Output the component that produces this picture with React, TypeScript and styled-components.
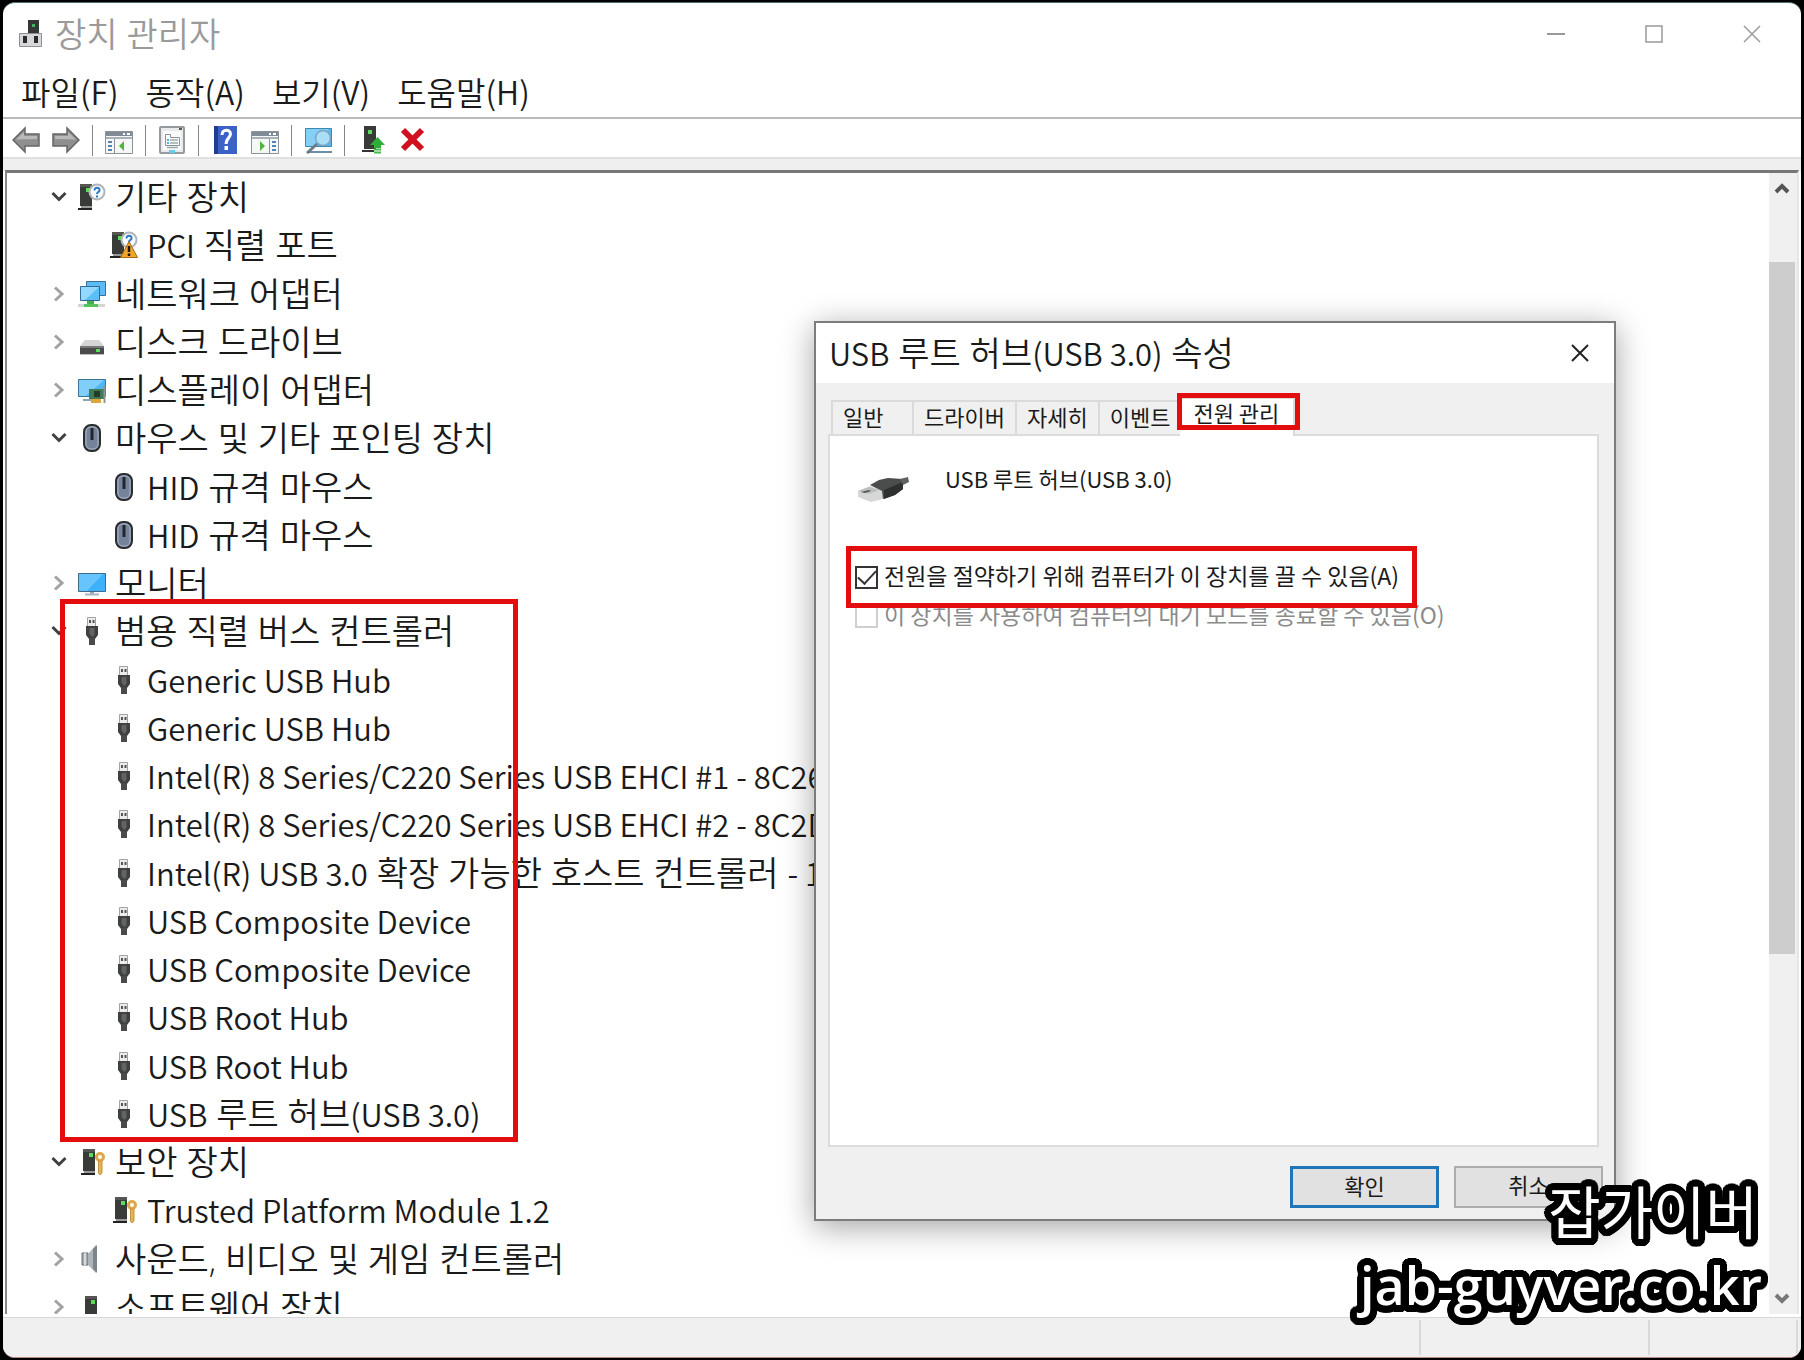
import React from "react";
import styled, { createGlobalStyle, css } from "styled-components";

const RED = "#e30d0d";

const GlobalStyle = createGlobalStyle`
  * { box-sizing: border-box; }
  html, body, #root { height: 100%; }
  body {
    margin: 0;
    background: #000;
    color: #1a1a1a;
    font-family: "Noto Sans CJK KR", "Noto Sans", sans-serif;
    font-weight: 350;
    overflow: hidden;
  }
  button { font: inherit; color: inherit; cursor: default; }
`;

const largeText = css`
  font-family: "Open Sans", "Noto Sans CJK KR", sans-serif;
  font-size: 34px;
  line-height: 40px;
  white-space: nowrap;
`;

const Latin = styled.span`
  font-family: "Noto Sans CJK KR", "Noto Sans", sans-serif;
  font-size: 31px;
`;

/* Latin runs are set three pixels smaller than the Hangul around them. */
const Mixed = ({ text }: { text: string }) => (
  <span>
    {text.split(/([!-~](?:[ -~]*[!-~])?)/).map((part, i) =>
      i % 2 ? <Latin key={i}>{part}</Latin> : part
    )}
  </span>
);

const Desktop = styled.div`
  height: 100%;
  padding: 2px 3px;
  display: flex;
  position: relative;
`;

const Window = styled.main`
  flex: 1;
  min-width: 0;
  display: flex;
  flex-direction: column;
  background: #fff;
  border-top: 1px solid #4d6b72;
  border-bottom: 1px solid #b98a8a;
  border-radius: 12px;
  overflow: hidden;
`;

const TitleBar = styled.header`
  height: 62px;
  flex: none;
  display: flex;
  align-items: center;
  gap: 10px;
  padding: 0 0 0 14px;
  color: #9a9a9a;
`;

const WindowTitle = styled.h1`
  ${largeText}
  flex: 1;
  margin: 0;
  font-weight: inherit;
`;

const CaptionButtons = styled.div`
  display: flex;
`;

const CaptionButton = styled.button`
  width: 98px;
  height: 60px;
  padding: 0;
  border: 0;
  background: none;
  display: grid;
  place-items: center;
`;

const MenuBar = styled.nav`
  height: 54px;
  flex: none;
  display: flex;
  align-items: center;
  gap: 27px;
  padding-left: 18px;
  border-bottom: 2px solid #b9bbbb;
`;

const MenuItem = styled.button`
  padding: 0;
  border: 0;
  background: none;
  font-size: 32px;
  line-height: 40px;
`;

const ToolBar = styled.div`
  height: 38px;
  flex: none;
  display: flex;
  align-items: center;
  gap: 12px;
  padding: 4px 0 0 9px;
`;

const ToolButton = styled.button`
  width: 28px;
  height: 28px;
  padding: 0;
  border: 0;
  background: none;
  display: block;
`;

const Separator = styled.span`
  width: 1px;
  height: 31px;
  background: #858585;
`;

const Body = styled.section`
  flex: 1;
  min-height: 0;
  display: flex;
  flex-direction: column;
  padding: 11px 2px 3px 2px;
  border-top: 2px solid #e0e0e0;
  background: linear-gradient(#efefef 13px, #fff 13px);
`;

const Pane = styled.div`
  flex: 1;
  min-height: 0;
  display: flex;
  border-top: 3px solid #777;
  border-left: 2px solid #8a8a8a;
  border-right: 2px solid #e6e6e6;
  overflow: hidden;
`;

const Tree = styled.ul`
  flex: 1;
  min-width: 0;
  height: calc(100% + 17px);
  margin: 0;
  padding: 0 0 0 44px;
  list-style: none;
  display: flex;
  flex-direction: column;
`;

const Group = styled.li<{ $rows: number }>`
  flex: ${(p) => p.$rows} 0 0;
  min-height: 0;
  display: grid;
  grid-auto-rows: 1fr;
  position: relative;
`;

const Row = styled.div<{ $child?: boolean }>`
  ${largeText}
  min-height: 0;
  display: flex;
  align-items: center;
  padding-left: ${(p) => (p.$child ? 59 : 0)}px;
`;

const Toggle = styled.button`
  width: 16px;
  height: 24px;
  margin-right: 11px;
  padding: 0;
  border: 0;
  background: none;
  display: grid;
  place-items: center;
`;

const RowIcon = styled.span`
  width: 28px;
  height: 28px;
  margin-right: 9px;
  flex: none;
`;

const GroupMark = styled.span`
  position: absolute;
  inset: -8px auto -4px 9px;
  width: 458px;
  border: 5px solid ${RED};
  pointer-events: none;
`;

const ScrollBar = styled.div`
  width: 28px;
  display: flex;
  flex-direction: column;
  align-items: center;
  background: #f0f0f0;
`;

const ScrollButton = styled.button`
  width: 28px;
  height: 30px;
  padding: 0 2px 0 0;
  border: 0;
  background: none;
  display: grid;
  place-items: center;
`;

const ScrollTrack = styled.div`
  flex: 1;
  width: 28px;
  padding: 59px 2px 0 0;
`;

const ScrollThumb = styled.div`
  height: calc(68% - 3px);
  background: #cdcdcd;
`;

const StatusBar = styled.footer`
  height: 40px;
  flex: none;
  display: flex;
  justify-content: flex-end;
  padding: 2px 3px 2px 0;
  border-top: 1px solid #d8d8d8;
  background: #f0f0f0;
`;

const StatusCell = styled.span<{ $width: number }>`
  width: ${(p) => p.$width}px;
  border-right: 2px solid #d9d9d9;
`;

const Dialog = styled.section`
  position: absolute;
  left: 814px;
  top: 321px;
  width: 802px;
  height: 900px;
  display: flex;
  flex-direction: column;
  border: 2px solid #7c7c7c;
  background: #f0f0f0;
  box-shadow: 0 6px 30px rgba(0, 0, 0, 0.36);
`;

const DialogTitleBar = styled.header`
  height: 60px;
  flex: none;
  display: flex;
  align-items: center;
  justify-content: space-between;
  padding: 0 10px 0 13px;
  background: #fff;
`;

const DialogTitle = styled.h2`
  ${largeText}
  margin: 0;
  font-weight: inherit;
`;

const DialogClose = styled.button`
  width: 48px;
  height: 48px;
  padding: 0;
  border: 0;
  background: none;
  display: grid;
  place-items: center;
`;

const TabList = styled.div`
  height: 51px;
  flex: none;
  display: flex;
  align-items: flex-end;
  padding-left: 15px;
  font-size: 22px;
  font-weight: 400;
`;

const Tab = styled.button<{ $active?: boolean }>`
  position: relative;
  height: ${(p) => (p.$active ? 39 : 34)}px;
  min-width: ${(p) => (p.$active ? 115 : 81)}px;
  margin-bottom: ${(p) => (p.$active ? -2 : 0)}px;
  padding: ${(p) => (p.$active ? "0 13px 11px" : "0 10px 4px")};
  border: solid #dadada;
  border-width: ${(p) => (p.$active ? "2px 2px 0 0" : "2px 0 0 2px")};
  background: ${(p) => (p.$active ? "#fff" : "#f0f0f0")};
  text-align: left;
  line-height: 26px;
  white-space: nowrap;
  z-index: 1;
`;

const TabMark = styled.span`
  position: absolute;
  inset: -6px -7px 6px -3px;
  border: 5px solid ${RED};
`;

const TabPanel = styled.div`
  flex: 1;
  margin: 0 15px 0 12px;
  padding: 26px 25px;
  border: 2px solid #dcdcdc;
  background: #fff;
  font-size: 22px;
  font-weight: 400;
  line-height: 32px;
`;

const DeviceLine = styled.div`
  display: flex;
  gap: 38px;
  height: 84px;
`;

const DevicePicture = styled.span`
  width: 52px;
  padding: 14px 0 0 3px;
`;

const OptionMark = styled.div`
  width: 571px;
  height: 62px;
  margin-left: -9px;
  padding-left: 4px;
  border: 5px solid ${RED};
  display: flex;
  align-items: center;
  position: relative;
  z-index: 1;
`;

const OptionLabel = styled.label<{ $muted?: boolean }>`
  display: flex;
  align-items: center;
  gap: 6px;
  height: 24px;
  color: ${(p) => (p.$muted ? "#8b8b8b" : "inherit")};
  font-size: 23px;
  white-space: nowrap;
`;

const OptionText = styled.span`
  padding-bottom: 4px;
`;

const MutedOption = styled.div`
  margin-top: -4px;
`;

const CheckBox = styled.input`
  appearance: none;
  width: 23px;
  height: 23px;
  margin: 0;
  border: 2px solid #333;
  background: #fff;
  display: grid;
  place-items: center;
  &:checked::after {
    content: "";
    width: 16px;
    height: 8px;
    margin-bottom: 5px;
    border: solid #333;
    border-width: 0 0 2px 2px;
    transform: rotate(-47deg);
  }
  &:disabled {
    border-color: #cfcfcf;
  }
`;

const DialogActions = styled.footer`
  height: 72px;
  flex: none;
  display: flex;
  justify-content: flex-end;
  gap: 15px;
  padding: 19px 11px 0 0;
`;

const ActionButton = styled.button<{ $default?: boolean }>`
  width: 149px;
  height: 42px;
  padding: 0 0 6px;
  border: ${(p) => (p.$default ? "3px solid #1f75b8" : "2px solid #adadad")};
  background: #e1e1e1;
  font-size: 22px;
  font-weight: 400;
  line-height: 32px;
`;

/* A ring of hard shadows gives the letters a round-cornered outline. */
const outline = (radius: number) =>
  Array.from({ length: 32 }, (_, i) => {
    const a = (i * Math.PI) / 16;
    return `${(Math.cos(a) * radius).toFixed(1)}px ${(Math.sin(a) * radius).toFixed(1)}px 0 #000`;
  }).join(", ");

const Watermark = styled.aside`
  position: absolute;
  right: 42px;
  bottom: 37px;
  color: #fff;
  line-height: 76px;
  text-align: right;
  text-shadow: ${outline(7)}, ${outline(4)};
`;

const WatermarkName = styled.div`
  padding-right: 4px;
  font-size: 57px;
  font-weight: 400;
`;

const WatermarkUrl = styled.div`
  font-family: "Open Sans", "Noto Sans", sans-serif;
  font-size: 52px;
  font-weight: 600;
`;

const Svg = ({ children, w = 28, h = 28 }: { children: React.ReactNode; w?: number; h?: number }) => (
  <svg width={w} height={h} viewBox={`0 0 ${w} ${h}`} fill="none" display="block" aria-hidden="true">
    {children}
  </svg>
);

const Tower = () => (
  <>
    <path d="M2 1h12v22H2z" fill="#383b38" />
    <path d="M2 1h12v3H2z" fill="#555" />
    <path d="M8 5h4v4H8z" fill="#5bdc5b" />
    <path d="M3 23h11v2H3z" fill="#999" />
    <path d="M0 25h14v2H0z" fill="#222" />
  </>
);

const Bubble = () => (
  <>
    <circle cx="19" cy="9" r="7.500" fill="#f8fbfd" stroke="#aeb4b8" strokeWidth="2" />
    <path d="M16.500 7.500c0-4 5.500-3.500 5 0-.3 1.700-2.500 1.500-2.500 3.500M19 12.500v2" stroke="#2878c8" strokeWidth="2" />
  </>
);

const icons: Record<string, React.ReactNode> = {
  unknown: <Svg><Tower /><Bubble /></Svg>,
  warning: (
    <Svg>
      <Tower />
      <Bubble />
      <path d="M19 10.500l8.500 16h-17z" fill="#f0a528" stroke="#a56a12" />
      <path d="M19 15v6M19 22.500v2.500" stroke="#22170a" strokeWidth="2.500" />
    </Svg>
  ),
  network: (
    <Svg>
      <path d="M8.500 1.500h19v14h-19z" fill="#5bbcf5" stroke="#3a6f96" />
      <path d="M2.500 6.500h19v14h-19z" fill="#5cc0f8" stroke="#2f6c98" />
      <path d="M3 7h18L7 20H3z" fill="#94d9fd" />
      <path d="M9 21h7v3H9z" fill="#3db54a" />
      <path d="M0 24h27v3H0z" fill="#d4d6d6" />
      <path d="M6 24h14v3H6z" fill="#55c35f" />
    </Svg>
  ),
  disk: (
    <Svg>
      <path d="M7 12h14l5 6H2z" fill="#d5d5d5" />
      <path d="M2 18h24v8H2z" fill="#4a4c4c" />
      <path d="M2 18h24v2H2z" fill="#777" />
      <path d="M18 21h4v3h-4z" fill="#58e05a" />
      <path d="M2 26h24v1H2z" fill="#bbb" />
    </Svg>
  ),
  display: (
    <Svg>
      <path d="M.500 3.500h27v17H.500z" fill="#4fb6f4" stroke="#3d7598" />
      <path d="M1 4h25L8 20H1z" fill="#80cffa" />
      <path d="M5 24h10" stroke="#8ba5b5" strokeWidth="2" />
      <path d="M11 13h15v10H11z" fill="#3f7a52" />
      <path d="M16 15h6v6h-6z" fill="#203d2c" />
      <path d="M26.500 10v17" stroke="#8d9494" strokeWidth="2" />
      <path d="M13 23h10v4H13z" fill="#dfa43a" />
    </Svg>
  ),
  mouse: (
    <Svg>
      <rect x="6" y="1" width="16" height="26" rx="7" fill="#74839a" stroke="#2b2d30" strokeWidth="2" />
      <rect x="8" y="3" width="12" height="22" rx="5" stroke="#aab4c2" strokeWidth="1" />
      <path d="M14 4v12" stroke="#22262c" strokeWidth="3" />
    </Svg>
  ),
  monitor: (
    <Svg>
      <path d="M.500 4.500h27v18H.500z" fill="#3fb0fa" stroke="#3e6c8a" />
      <path d="M1 5h24L9 22H1z" fill="#68c4fc" />
      <path d="M12 23h4v2h-4z" fill="#9ab" />
      <path d="M7 25.500h14" stroke="#a6b7c2" strokeWidth="2" />
    </Svg>
  ),
  usb: (
    <Svg>
      <path d="M9.500.500h8v9h-8z" fill="#ececec" stroke="#a3a3a3" />
      <path d="M11 3h2v3h-2zM14.500 3h2v3h-2z" fill="#555" />
      <path d="M8 9h12v9l-3 4h-6l-3-4z" fill="#3f4040" />
      <path d="M11.500 11h5v7l-2 2-3-3z" fill="#626464" />
      <path d="M11 21h6v7h-6z" fill="#4a4a4a" />
    </Svg>
  ),
  security: (
    <Svg>
      <g transform="translate(3 0)">
        <Tower />
        <circle cx="19" cy="9" r="3.500" stroke="#dba94a" strokeWidth="3" fill="#fff" />
        <path d="M17.500 13h3.500v12l-2 2-1.500-2z" fill="#e3b556" stroke="#c4923a" />
      </g>
    </Svg>
  ),
  sound: (
    <Svg>
      <path d="M4 8h6v12H4z" fill="#a4abb0" stroke="#666e74" />
      <path d="M10 9l8-9v28l-8-8z" fill="#aeb5ba" />
      <path d="M15 4l4-4v28l-4-4z" fill="#7c858b" />
      <path d="M7 8v12" stroke="#d5dadd" strokeWidth="2" />
    </Svg>
  ),
  software: <Svg><g transform="translate(5 2)"><Tower /></g></Svg>,
};

const Chevron = ({ open }: { open: boolean }) =>
  open ? (
    <Svg w={16} h={12}><path d="M1.500 2l6.500 6.500L14.500 2" stroke="#404040" strokeWidth="3" /></Svg>
  ) : (
    <Svg w={12} h={16}><path d="M2 1.500L9 8l-7 6.500" stroke="#a2a2a2" strokeWidth="3" /></Svg>
  );

interface DeviceGroup {
  name: string;
  icon: string;
  marked?: boolean;
  childIcon?: string;
  devices?: string[];
}

const groups: DeviceGroup[] = [
  { name: "기타 장치", icon: "unknown", childIcon: "warning", devices: ["PCI 직렬 포트"] },
  { name: "네트워크 어댑터", icon: "network" },
  { name: "디스크 드라이브", icon: "disk" },
  { name: "디스플레이 어댑터", icon: "display" },
  {
    name: "마우스 및 기타 포인팅 장치",
    icon: "mouse",
    devices: ["HID 규격 마우스", "HID 규격 마우스"],
  },
  { name: "모니터", icon: "monitor" },
  {
    name: "범용 직렬 버스 컨트롤러",
    icon: "usb",
    marked: true,
    devices: [
      "Generic USB Hub",
      "Generic USB Hub",
      "Intel(R) 8 Series/C220 Series USB EHCI #1 - 8C26",
      "Intel(R) 8 Series/C220 Series USB EHCI #2 - 8C2D",
      "Intel(R) USB 3.0 확장 가능한 호스트 컨트롤러 - 1.0(Microsoft)",
      "USB Composite Device",
      "USB Composite Device",
      "USB Root Hub",
      "USB Root Hub",
      "USB 루트 허브(USB 3.0)",
    ],
  },
  { name: "보안 장치", icon: "security", devices: ["Trusted Platform Module 1.2"] },
  { name: "사운드, 비디오 및 게임 컨트롤러", icon: "sound" },
  { name: "소프트웨어 장치", icon: "software" },
];

const Arrow = ({ flip }: { flip?: boolean }) => (
  <Svg>
    <g transform={flip ? "matrix(-1 0 0 1 28 0)" : undefined}>
      <path d="M1 14L13 2v6h14v12H13v6z" fill="#8f8f8f" stroke="#666" strokeWidth="1.500" />
      <path d="M4 13.500L12 6v4h13v3z" fill="#b9b9b9" />
    </g>
  </Svg>
);

const PaneIcon = ({ flip }: { flip?: boolean }) => (
  <Svg>
    <path d="M.500 5.500h27v22H.500z" fill="#f6f8f8" stroke="#8b9297" />
    <path d="M1 6h26v4H1z" fill="#7f8b96" />
    <path d="M18 8h2M22 8h3" stroke="#fff" strokeWidth="2" />
    <path d="M1 12h26" stroke="#a9b0b6" strokeWidth="2" />
    <g transform={flip ? "matrix(-1 0 0 1 28 0)" : undefined}>
      <path d="M9.500 13v14" stroke="#8b9297" />
      <path d="M3 16h4M3 20h4M3 24h4" stroke="#4f86b5" strokeWidth="2" />
      <path d="M19 15v10l-5-5z" fill="#50b53c" />
    </g>
  </Svg>
);

const PropertiesIcon = () => (
  <Svg>
    <rect x="2" y="1" width="24" height="26" rx="1" fill="#e8eaeb" stroke="#949a9e" strokeWidth="2" />
    <path d="M5 5h18v19H5z" fill="#fafafa" />
    <path d="M21 3h3" stroke="#555" strokeWidth="2" />
    <path d="M7.500 8.500h5v3h9v8h-14z" fill="#fff" stroke="#8a9298" />
    <path d="M9 14h2M9 17h2" stroke="#4fb4dc" strokeWidth="2" />
    <path d="M12 14h8M12 17h8M9 21.500h11" stroke="#9aa" strokeWidth="1.500" />
    <path d="M11 24h6v3h-6z" fill="#67cdea" />
  </Svg>
);

const HelpIcon = () => (
  <Svg>
    <path d="M3 0h23v28H3z" fill="#3d62c6" />
    <path d="M3 0h4v28H3z" fill="#1f3b92" />
    <path d="M11 9c0-6.500 8.500-6 8.500-1 0 4-4.500 4-4.500 10" stroke="#fff" strokeWidth="3" />
    <path d="M13.500 20h3.500v4h-3.500z" fill="#fff" />
  </Svg>
);

const ScanIcon = () => (
  <Svg>
    <path d="M1.500 2.500h26v18h-26z" fill="#58b9ee" stroke="#3e86b3" />
    <path d="M2 3h23L9 20H2z" fill="#83d0f7" />
    <path d="M5 26h23" stroke="#6d8ea5" strokeWidth="2" />
    <circle cx="19" cy="12" r="7.500" fill="#a9def6" stroke="#7da4bd" strokeWidth="1.500" />
    <path d="M13 18l-10 9" stroke="#6c7d88" strokeWidth="3" />
  </Svg>
);

const UpdateIcon = () => (
  <Svg>
    <g transform="translate(5 0)">
      <path d="M2 0h12v23H2z" fill="#383b38" />
      <path d="M6 4h4v4H6z" fill="#5bdc5b" />
      <path d="M0 24h12v2H0z" fill="#333" />
      <path d="M15.500 11l7.500 8h-4v3h-7v-3H8z" fill="#2fae3a" />
      <path d="M12 23.500h7M12 26.500h7" stroke="#3fbb48" strokeWidth="2" />
    </g>
  </Svg>
);

const RemoveIcon = () => (
  <Svg><path d="M6 4l19 19M25 4L6 23" stroke="#d01220" strokeWidth="6" /></Svg>
);

const ManagerIcon = () => (
  <Svg>
    <path d="M11 0h11v13H11z" fill="#333735" />
    <path d="M15 4h3v3h-3z" fill="#42b560" />
    <path d="M2.500 13.500h22v13h-22z" fill="#d7d7da" stroke="#909094" />
    <path d="M6 16h4v7H6zM17 16h4v7h-4z" fill="#2b2b2b" />
  </Svg>
);

const UsbPlug = () => (
  <Svg w={52} h={26}>
    <path d="M0 15l12-5 13 5v8l-12 3-13-5z" fill="#d6d7d7" />
    <path d="M0 15l11-4 10 3-10 4z" fill="#bdbebf" />
    <path d="M3 16l8-2 2 1-6 2z" fill="#555" />
    <path d="M12 9l9-5 9-2 15 1v10l-8 6-12 4-1-8z" fill="#4b4c4c" />
    <path d="M26 14l19-8v7l-8 6-11 4z" fill="#2e2f2f" />
    <path d="M42 3l8-2 1 5-6 3z" fill="#606161" />
  </Svg>
);

export default function App() {
  return (
    <Desktop>
      <GlobalStyle />
      <Window>
        <TitleBar>
          <ManagerIcon />
          <WindowTitle>장치 관리자</WindowTitle>
          <CaptionButtons>
            <CaptionButton aria-label="최소화"><Svg w={18} h={18}><path d="M0 9h18" stroke="#999" strokeWidth="2" /></Svg></CaptionButton>
            <CaptionButton aria-label="최대화"><Svg w={18} h={18}><path d="M1 1h16v16H1z" stroke="#999" strokeWidth="1.500" /></Svg></CaptionButton>
            <CaptionButton aria-label="닫기"><Svg w={18} h={18}><path d="M1 1l16 16M17 1L1 17" stroke="#999" strokeWidth="1.500" /></Svg></CaptionButton>
          </CaptionButtons>
        </TitleBar>
        <MenuBar>
          {["파일(F)", "동작(A)", "보기(V)", "도움말(H)"].map((m) => <MenuItem key={m}>{m}</MenuItem>)}
        </MenuBar>
        <ToolBar>
          <ToolButton aria-label="뒤로"><Arrow /></ToolButton>
          <ToolButton aria-label="앞으로"><Arrow flip /></ToolButton>
          <Separator />
          <ToolButton aria-label="콘솔 트리"><PaneIcon /></ToolButton>
          <Separator />
          <ToolButton aria-label="속성"><PropertiesIcon /></ToolButton>
          <Separator />
          <ToolButton aria-label="도움말"><HelpIcon /></ToolButton>
          <ToolButton aria-label="작업 창"><PaneIcon flip /></ToolButton>
          <Separator />
          <ToolButton aria-label="하드웨어 변경 사항 검색"><ScanIcon /></ToolButton>
          <Separator />
          <ToolButton aria-label="드라이버 업데이트"><UpdateIcon /></ToolButton>
          <ToolButton aria-label="제거"><RemoveIcon /></ToolButton>
        </ToolBar>
        <Body>
          <Pane>
            <Tree>
              {groups.map((g) => {
                const devices = g.devices ?? [];
                return (
                  <Group key={g.name} $rows={devices.length + 1}>
                    <Row>
                      <Toggle aria-label={g.name} aria-expanded={devices.length > 0}>
                        <Chevron open={devices.length > 0} />
                      </Toggle>
                      <RowIcon>{icons[g.icon]}</RowIcon>
                      <span>{g.name}</span>
                    </Row>
                    {devices.map((d, i) => (
                      <Row key={i} $child>
                        <RowIcon>{icons[g.childIcon ?? g.icon]}</RowIcon>
                        <Mixed text={d} />
                      </Row>
                    ))}
                    {g.marked && <GroupMark />}
                  </Group>
                );
              })}
            </Tree>
            <ScrollBar>
              <ScrollButton aria-label="위로"><Svg w={16} h={12}><path d="M2 10l6-6 6 6" stroke="#555" strokeWidth="4" /></Svg></ScrollButton>
              <ScrollTrack><ScrollThumb /></ScrollTrack>
              <ScrollButton aria-label="아래로"><Svg w={16} h={12}><path d="M2 2l6 6 6-6" stroke="#777" strokeWidth="4" /></Svg></ScrollButton>
            </ScrollBar>
          </Pane>
        </Body>
        <StatusBar>
          <StatusCell $width={2} />
          <StatusCell $width={229} />
          <StatusCell $width={148} />
        </StatusBar>
      </Window>

      <Dialog role="dialog" aria-labelledby="dialog-title">
        <DialogTitleBar>
          <DialogTitle id="dialog-title"><Mixed text="USB 루트 허브(USB 3.0) 속성" /></DialogTitle>
          <DialogClose aria-label="닫기"><Svg w={18} h={18}><path d="M1 1l16 16M17 1L1 17" stroke="#222" strokeWidth="2" /></Svg></DialogClose>
        </DialogTitleBar>
        <TabList role="tablist">
          {["일반", "드라이버", "자세히", "이벤트"].map((t) => <Tab key={t} role="tab">{t}</Tab>)}
          <Tab role="tab" aria-selected $active>전원 관리<TabMark /></Tab>
        </TabList>
        <TabPanel role="tabpanel">
          <DeviceLine>
            <DevicePicture><UsbPlug /></DevicePicture>
            <span>USB 루트 허브(USB 3.0)</span>
          </DeviceLine>
          <OptionMark>
            <OptionLabel>
              <CheckBox type="checkbox" defaultChecked />
              <OptionText>전원을 절약하기 위해 컴퓨터가 이 장치를 끌 수 있음(A)</OptionText>
            </OptionLabel>
          </OptionMark>
          <MutedOption>
            <OptionLabel $muted>
              <CheckBox type="checkbox" disabled />
              <OptionText>이 장치를 사용하여 컴퓨터의 대기 모드를 종료할 수 있음(O)</OptionText>
            </OptionLabel>
          </MutedOption>
        </TabPanel>
        <DialogActions>
          <ActionButton $default>확인</ActionButton>
          <ActionButton>취소</ActionButton>
        </DialogActions>
      </Dialog>

      <Watermark>
        <WatermarkName>잡가이버</WatermarkName>
        <WatermarkUrl>jab-guyver.co.kr</WatermarkUrl>
      </Watermark>
    </Desktop>
  );
}
